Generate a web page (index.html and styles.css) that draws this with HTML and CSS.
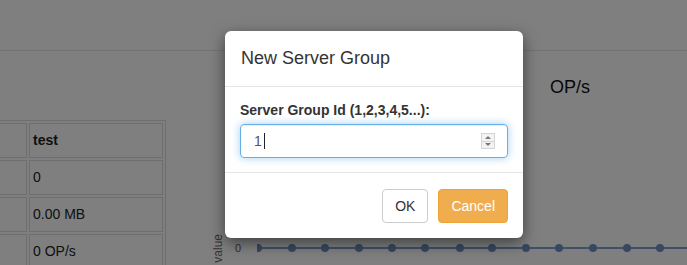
FILE: index.html
```html
<!DOCTYPE html>
<html lang="en">
<head>
  <meta charset="UTF-8">
  <title>Server Groups</title>
  <link rel="stylesheet" href="styles.css">
</head>
<body>
  <!-- Page behind the dialog -->
  <div class="page">
    <div class="topbar"></div>
    <div class="content">
      <div class="stats">
        <table class="stats-table">
          <tr><td class="name"></td><td><b>test</b></td></tr>
          <tr><td class="name"></td><td>0</td></tr>
          <tr><td class="name"></td><td>0.00 MB</td></tr>
          <tr><td class="name"></td><td>0 OP/s</td></tr>
        </table>
      </div>
      <div class="chart">
        <div class="chart-title">OP/s</div>
        <div class="plot">
          <div class="axis-title">value</div>
          <div class="tick">0</div>
          <svg class="series" width="440" height="30" viewBox="0 0 440 30">
            <line x1="0" y1="15" x2="440" y2="15" stroke="#7ba2d2" stroke-width="2"/>
            <g fill="#6f92c0">
              <circle cx="1" cy="15" r="4"/>
              <circle cx="35" cy="15" r="4"/>
              <circle cx="68" cy="15" r="4"/>
              <circle cx="102" cy="15" r="4"/>
              <circle cx="135" cy="15" r="4"/>
              <circle cx="168" cy="15" r="4"/>
              <circle cx="203" cy="15" r="4"/>
              <circle cx="235" cy="15" r="4"/>
              <circle cx="269" cy="15" r="4"/>
              <circle cx="302" cy="15" r="4"/>
              <circle cx="336" cy="15" r="4"/>
              <circle cx="370" cy="15" r="4"/>
              <circle cx="403" cy="15" r="4"/>
              <circle cx="437" cy="15" r="4"/>
            </g>
          </svg>
        </div>
      </div>
    </div>
  </div>

  <div class="backdrop"></div>

  <!-- New server group dialog -->
  <div class="modal">
    <div class="modal-header">
      <h4 class="modal-title">New Server Group</h4>
    </div>
    <div class="modal-body">
      <label class="field-label">Server Group Id (1,2,3,4,5...):</label>
      <div class="field">
        <span class="field-value">1</span><span class="caret"></span>
        <span class="spin">
          <span class="spin-up"></span>
          <span class="spin-down"></span>
        </span>
      </div>
    </div>
    <div class="modal-footer">
      <button class="btn">OK</button>
      <button class="btn btn-warning">Cancel</button>
    </div>
  </div>
</body>
</html>
```

FILE: styles.css
```css
/* Basic page styling */
body {
  margin: 0;
  width: 687px;
  height: 265px;
  overflow: hidden;
  position: relative;
  background: #fff;
  color: #333;
  font-family: "Liberation Sans", Arial, sans-serif;
  font-size: 14px;
}
.topbar {
  height: 50px;
  border-bottom: 1px solid #e6e6e6;
}
.content {
  display: flex;
  align-items: flex-start;
}
/* Stats table */
.stats {
  flex-shrink: 0;
  margin-top: 69px;
  margin-left: -60px;
}
.stats-table {
  border: 1px solid #ddd;
  border-spacing: 2px;
}
.stats-table td {
  border: 1px solid #ddd;
  padding: 8px 3px;
  height: 17px;
  line-height: 17px;
  width: 126px;
  color: #222;
  white-space: nowrap;
}
.stats-table td.name {
  width: 76px;
}
/* Chart */
.chart {
  margin-left: 45px;
  width: 718px;
  flex-shrink: 0;
}
.chart-title {
  margin-top: 26px;
  line-height: 21px;
  font-size: 18px;
  color: #111;
  text-align: center;
}
.plot {
  margin-top: 134px;
  height: 31px;
  display: flex;
  align-items: center;
}
.axis-title {
  align-self: flex-end;
  writing-mode: vertical-rl;
  transform: rotate(180deg);
  font-size: 12px;
  color: #666;
}
.tick {
  font-size: 11px;
  color: #606060;
  margin-left: 10px;
  width: 22px;
}
.series {
  display: block;
}
/* Dialog */
.backdrop {
  position: absolute;
  top: 0;
  left: 0;
  right: 0;
  bottom: 0;
  background: rgba(0, 0, 0, 0.5);
}
.modal {
  position: absolute;
  left: 225px;
  top: 31px;
  width: 298px;
  background: #fff;
  border-radius: 6px;
  box-shadow: 0 5px 15px rgba(0, 0, 0, 0.5);
}
.modal-header {
  padding: 15px 16px;
  border-bottom: 1px solid #e5e5e5;
}
.modal-title {
  margin: 0;
  font-size: 18px;
  font-weight: normal;
  line-height: 25px;
}
.modal-body {
  padding: 13px 15px 14px;
}
.field-label {
  display: block;
  font-weight: bold;
  line-height: 20px;
  margin-bottom: 4px;
}
.field {
  display: flex;
  align-items: center;
  height: 34px;
  box-sizing: border-box;
  padding: 6px 12px 6px 13px;
  border: 1px solid #66afe9;
  border-radius: 4px;
  box-shadow: inset 0 1px 1px rgba(0, 0, 0, 0.075), 0 0 8px rgba(102, 175, 233, 0.6);
  color: #555;
}
.caret {
  width: 1px;
  height: 16px;
  margin-left: 2px;
  background: #222;
}
.spin {
  margin-left: auto;
  width: 12px;
  height: 14px;
  border: 1px solid #d4d4d4;
  display: flex;
  flex-direction: column;
  background: #f3f3f3;
}
.spin-up,
.spin-down {
  flex: 1;
  display: flex;
  align-items: center;
  justify-content: center;
}
.spin-up {
  border-bottom: 1px solid #d4d4d4;
}
.spin-up::after {
  content: "";
  border: 3px solid transparent;
  border-bottom: 3px solid #777;
  border-top: 0;
}
.spin-down::after {
  content: "";
  border: 3px solid transparent;
  border-top: 3px solid #777;
  border-bottom: 0;
}
.modal-footer {
  padding: 16px 15px 15px;
  border-top: 1px solid #e5e5e5;
  display: flex;
  justify-content: flex-end;
  gap: 10px;
}
.btn {
  font-family: inherit;
  font-size: 14px;
  line-height: 20px;
  padding: 6px 12px;
  border: 1px solid #ccc;
  border-radius: 4px;
  background: #fff;
  color: #333;
}
.btn-warning {
  background: #f0ad4e;
  border-color: #eea236;
  color: #fff;
}
```
